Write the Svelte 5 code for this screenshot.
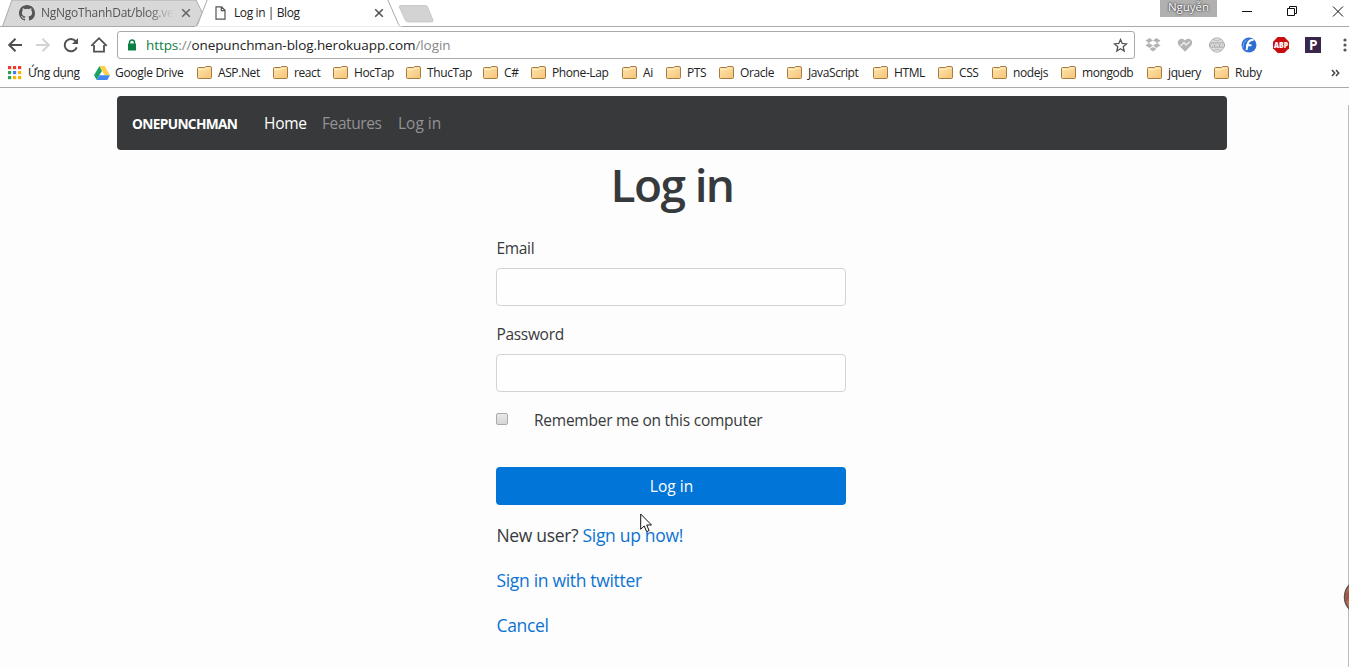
<script>
  const bookmarks = [
    ['ASP.Net', 76], ['react', 60], ['HocTap', 73], ['ThucTap', 77], ['C#', 48],
    ['Phone-Lap', 91], ['Ai', 44], ['PTS', 53], ['Oracle', 68], ['JavaScript', 86],
    ['HTML', 65], ['CSS', 54], ['nodejs', 69], ['mongodb', 86], ['jquery', 67], ['Ruby', 60]
  ];
  const appColors = ['#f03a2e', '#f03a2e', '#f03a2e', '#2fa14f', '#3c80f0', '#f6b400', '#2fa14f', '#f6b400', '#f6b400'];
</script>

<div class="window">
  <div class="tabstrip">
    <svg class="tabshapes" width="1349" height="27" viewBox="0 0 1349 27">
      <path d="M0 26.5H1349" stroke="#aaa" />
      <path d="M2.5 26.5L12 0H196L202.500 13L196 26.500Z" fill="#d8d8d8" stroke="#aaa" />
      <path d="M195.500 27C197 26 198 24 199 21L207.500 -1H387.500L397.500 22C399 25.500 400 26.500 402 27Z" fill="#fff" stroke="#aaa" />
      <path d="M195 27H402" stroke="#fff" />
      <path d="M401 5.500H425.500Q427 5.500 427.700 7L433 20Q433.500 22 431.500 22H408Q406 22 405.200 20L399.300 7Q398.800 5.500 401 5.500Z" fill="#d3d3d3" stroke="#bdbdbd" stroke-width=".7" />
    </svg>
    <div class="tab first">
      <svg width="16" height="16" viewBox="0 0 16 16"><path fill="#555" d="M8 0C3.580 0 0 3.580 0 8c0 3.540 2.290 6.530 5.470 7.590.4.070.550-.170.550-.380 0-.190-.010-.820-.010-1.490-2.010.370-2.530-.490-2.690-.940-.090-.230-.480-.940-.820-1.130-.280-.150-.680-.520-.010-.530.630-.010 1.080.580 1.230.820.720 1.210 1.870.870 2.330.660.070-.520.280-.870.510-1.070-1.780-.2-3.640-.890-3.640-3.950 0-.870.310-1.590.820-2.150-.080-.2-.360-1.020.080-2.120 0 0 .670-.210 2.200.820a7.500 7.500 0 0 1 4 0c1.530-1.040 2.200-.820 2.200-.820.440 1.100.160 1.920.080 2.120.510.560.820 1.270.820 2.150 0 3.070-1.870 3.750-3.650 3.950.290.250.540.730.540 1.480 0 1.070-.010 1.930-.010 2.200 0 .210.150.460.550.380A8 8 0 0 0 16 8c0-4.420-3.580-8-8-8z" /></svg>
      <span class="tabname fade">NgNgoThanhDat/blog.ve</span>
      <svg class="x" width="10" height="10" viewBox="0 0 10 10"><path d="M1.200 1.200L8.800 8.800M8.800 1.200L1.200 8.800" stroke="#666" stroke-width="1.600" /></svg>
    </div>
    <div class="tab second">
      <svg width="11" height="14" viewBox="0 0 11 14"><path d="M1 .8H6.500L10 4.300V13.200H1ZM6.300 1V4.600H10" fill="#fff" stroke="#555" stroke-width="1.200" /></svg>
      <span class="tabname">Log in | Blog</span>
      <svg class="x" width="10" height="10" viewBox="0 0 10 10"><path d="M1.200 1.200L8.800 8.800M8.800 1.200L1.200 8.800" stroke="#555" stroke-width="1.600" /></svg>
    </div>
    <div class="controls">
      <span class="profile">Nguyễn</span>
      <svg width="104" height="26" viewBox="1242 0 104 26" fill="none" stroke="#111">
        <path d="M1242 11.500H1252M1287.500 8.500H1294.500V15.500H1287.500ZM1289.500 8V6.500H1296.500V13.500H1295M1333 6.500L1343 16.500M1343 6.500L1333 16.500" />
      </svg>
    </div>
  </div>

  <div class="toolbar">
    <svg class="nav-icons" width="108" height="20" viewBox="0 0 108 20" fill="none" stroke="#505050" stroke-width="2">
      <path d="M22 10H9.500M15.500 3.700L9.200 10L15.500 16.300" />
      <path d="M36 10H48.500M42.500 3.700L48.800 10L42.500 16.300" stroke="#d3d3d3" />
      <path d="M75.700 6.200A6.200 6.200 0 1 0 76.700 12.300" />
      <path d="M78 3V9H72Z" fill="#505050" stroke="none" />
      <path d="M91.300 10.800L99 3.200L106.700 10.800M94 10V16.700H104V10" stroke-width="1.800" />
    </svg>
    <div class="address">
      <svg width="10" height="12" viewBox="0 0 10 12"><path d="M2.500 5V3.500A2.500 2.500 0 0 1 7.500 3.500V5" fill="none" stroke="#0b8043" stroke-width="1.500" /><rect x="1" y="4.500" width="8" height="7" rx=".6" fill="#0b8043" /></svg>
      <span class="url"><i>https</i><b>://</b>onepunchman-blog.herokuapp.com<b>/login</b></span>
      <svg class="star" width="15" height="15" viewBox="0 0 15 15"><path d="M7.500 1.500L9.200 5.500L13.500 5.900L10.200 8.700L11.200 13L7.500 10.700L3.800 13L4.800 8.700L1.500 5.900L5.800 5.500Z" fill="none" stroke="#555" stroke-width="1.300" /></svg>
    </div>
    <div class="extensions">
      <svg width="16" height="16" viewBox="0 0 16 16" fill="#b4b4b4"><path d="M4.700 1L8 3.500L3.700 6L.5 3.500ZM11.300 1L15.500 3.500L12.300 6L8 3.500ZM3.700 6L8 8.600L4.700 11L.5 8.600ZM12.300 6L15.500 8.600L11.300 11L8 8.600ZM4.500 12L8 10L11.500 12L8 14.500Z" /></svg>
      <svg width="16" height="16" viewBox="0 0 16 16"><path d="M8 14.700L1.700 8.200C-1.500 4 4.500-.8 8 3.400C11.500-.8 17.500 4 14.300 8.200Z" fill="#b4b4b4" /><path d="M3.500 9L7 5.600L9 8L12.600 4.700" stroke="#eee" stroke-width="1.400" fill="none" /></svg>
      <svg width="16" height="16" viewBox="0 0 16 16"><circle cx="8" cy="8" r="7.200" fill="#ddd" stroke="#b8b8b8" /><path d="M4 2.500Q8 5 12 2.500M4 13.500Q8 11 12 13.500" stroke="#bbb" fill="none" /><rect y="5.500" width="16" height="5" rx="2" fill="#999" /><text x="8" y="9.800" text-anchor="middle" font-size="5" font-weight="700" fill="#eee">WWW</text></svg>
      <svg width="16" height="16" viewBox="0 0 16 16"><circle cx="8" cy="8" r="7.500" fill="#2d70d2" /><path d="M12.500 3C8.500 2.500 7 5 6.500 8L5.500 13M5 8.300H10.500" stroke="#fff" stroke-width="2" fill="none" /><path d="M1.700 11Q2 5 6 2.500" stroke="#7cb0f5" fill="none" /></svg>
      <svg width="16" height="16" viewBox="0 0 16 16"><path d="M4.700 0H11.300L16 4.700V11.300L11.300 16H4.700L0 11.300V4.700Z" fill="#c70d0d" /><text x="8" y="11" text-anchor="middle" font-size="8" font-weight="800" fill="#fff" textLength="14" lengthAdjust="spacingAndGlyphs">ABP</text></svg>
      <svg width="16" height="16" viewBox="0 0 16 16"><rect width="16" height="16" fill="#39264d" /><text x="8.200" y="12.900" text-anchor="middle" font-size="13.500" font-weight="700" fill="#fff">P</text></svg>
      <svg class="dots" width="4" height="16" viewBox="0 0 4 16" fill="#555"><circle cx="2" cy="3" r="1.600" /><circle cx="2" cy="8" r="1.600" /><circle cx="2" cy="13" r="1.600" /></svg>
    </div>
  </div>

  <div class="bookmarks">
    <div class="bookmark apps" style:width="86px">
      <svg width="14" height="14" viewBox="0 0 14 14">
        {#each appColors as color, i}<rect x={(i % 3) * 5} y={Math.floor(i / 3) * 5} width="3.200" height="3.200" fill={color} />{/each}
      </svg><span>Ứng dụng</span>
    </div>
    <div class="bookmark drive" style:width="103px">
      <svg width="16" height="14" viewBox="0 0 16 14"><path d="M5.400 0L0 9.300L2.700 14L8 4.700Z" fill="#1da362" /><path d="M5.400 0H10.700L16 9.300H10.700Z" fill="#ffcf48" /><path d="M5.400 9.300H16L13.300 14H2.700Z" fill="#4285f4" /></svg><span>Google Drive</span>
    </div>
    {#each bookmarks as [name, width]}
      <div class="bookmark" style:width="{width}px">
        <svg class="folder" width="15" height="13" viewBox="0 0 15 13"><path d="M.5 11.500V2.500Q.5 1.500 1.500 1.500H7.500L8.700 .5H13Q14.500 .5 14.500 2V11.500Q14.500 12.500 13.500 12.500H1.500Q.5 12.500 .5 11.500Z" fill="url(#folder)" stroke="#a87b42" /><path d="M1.500 3.500H7.700L9 2.200H13.500" fill="none" stroke="#fff0c5" /></svg><span>{name}</span>
      </div>
    {/each}
    <svg class="more" width="9" height="8" viewBox="0 0 9 8"><path d="M1 1L3.700 4L1 7M5 1L7.700 4L5 7" fill="none" stroke="#444" stroke-width="1.500" /></svg>
    <svg class="defs" width="0" height="0"><defs><linearGradient id="folder" x1="0" y1="0" x2="1" y2="1"><stop offset="0" stop-color="#ffe5ae" /><stop offset="1" stop-color="#f5c477" /></linearGradient></defs></svg>
  </div>

  <main>
    <nav>
      <strong>ONEPUNCHMAN</strong>
      <a class="active home" href="#home">Home</a>
      <a class="features" href="#features">Features</a>
      <a class="login" href="#login">Log in</a>
    </nav>
    <h1>Log in</h1>
    <form>
      <label for="email">Email</label>
      <input id="email" class="field" type="email" />
      <label class="password" for="password">Password</label>
      <input id="password" class="field" type="password" />
      <label class="remember"><input type="checkbox" /><span>Remember me on this computer</span></label>
      <button type="button">Log in</button>
      <p class="signup">New user? <a href="#signup">Sign up now!</a></p>
      <p class="twitter"><a href="#twitter">Sign in with twitter</a></p>
      <p class="cancel"><a href="#cancel">Cancel</a></p>
    </form>
    <div class="scroll-edge"></div>
    <svg class="bubble" width="6" height="38" viewBox="0 0 6 38"><circle cx="19" cy="19" r="17.500" fill="#c06b50" stroke="#555" stroke-width="1.500" /><path d="M2 17L6 12V21L3 24Z" fill="#a45545" /></svg>
    <svg class="cursor" width="13" height="20" viewBox="0 0 13 20"><path d="M.7 1V16.300L4.200 13L6.700 18.700L9.100 17.600L6.700 12H11.500Z" fill="#fff" stroke="#111" /></svg>
  </main>
</div>

<style>
  :global(body) { margin: 0; overflow: hidden; }
  .window { width: 1349px; height: 667px; display: flex; flex-direction: column; position: relative; overflow: hidden; background: #fff; font-family: "Open Sans", "Noto Sans", sans-serif; }
  svg { display: block; flex: none; }
  .tabstrip { height: 27px; position: relative; display: flex; align-items: flex-start; font-size: 12px; color: #222; }
  .tabshapes { position: absolute; inset: 0; }
  .tab { position: relative; height: 26px; display: flex; align-items: center; box-sizing: border-box; }
  .first { width: 202px; padding: 0 11px 0 19px; }
  .second { width: 198px; padding: 0 16px 0 13px; }
  .tabname { margin: 0 0 2px 6px; white-space: nowrap; }
  .second .tabname { margin-left: 8px; letter-spacing: -.4px; }
  .x { margin-left: auto; }
  .fade { width: 133px; overflow: hidden; color: #555; letter-spacing: -.25px; mask-image: linear-gradient(to right, #000 80%, transparent); }
  .controls { margin-left: auto; display: flex; gap: 25px; padding-right: 3px; position: relative; }
  .profile { width: 57px; height: 17px; line-height: 14px; background: #b0b0b0; color: #fff; text-align: center; font-size: 11.500px; text-shadow: 0 0 2px #333, 0 0 2px #444; }
  .toolbar { height: 36px; display: flex; align-items: center; }
  .nav-icons { margin-right: 9px; }
  .address { width: 1018px; height: 28px; box-sizing: border-box; border: 1px solid #aaa; border-radius: 3px; display: flex; align-items: center; padding: 0 6px 0 9px; }
  .url { margin-left: 9px; font-size: 13.500px; white-space: nowrap; color: #222; letter-spacing: -.08px; }
  .url i { color: #0b8043; font-style: normal; }
  .url b { color: #888; font-weight: 400; }
  .star { margin-left: auto; }
  .extensions { margin-left: 10px; display: flex; gap: 16px; }
  .extensions svg { overflow: visible; }
  .dots { margin-left: 6px; }
  .bookmarks { height: 25px; border-bottom: 1px solid #aaa; display: flex; padding: 0 9px 0 8px; align-items: flex-start; font-size: 12px; color: #222; position: relative; box-sizing: border-box; }
  .bookmark { height: 20px; flex: none; display: flex; align-items: center; gap: 6px; white-space: nowrap; letter-spacing: -.4px; }
  .bookmark span { margin-bottom: 2px; }
  .folder { margin-bottom: 1px; }
  .drive { gap: 5px; letter-spacing: -.3px; }
  .more { margin: 6px 0 0 auto; }
  .defs { position: absolute; }
  main { position: relative; display: flow-root; flex: 1; background: #fdfdfd; color: #373a3c; }
  nav { box-sizing: border-box; width: 1110px; height: 54px; margin: 8px 0 0 117px; border-radius: 4px; background: #38393b; display: flex; align-items: center; padding: 0 0 0 15px; font-size: 15.500px; color: #fff; }
  a { color: #0c73d3; text-decoration: none; }
  nav strong { font-size: 13.700px; width: 132px; letter-spacing: -.65px; }
  nav a { color: #929394; }
  nav .active { color: #fff; letter-spacing: -.3px; }
  .home { width: 58px; }
  .features { width: 76px; letter-spacing: -.4px; }
  h1 { margin: 6px 0 0; padding-left: 497px; width: 350px; text-align: center; font-size: 46px; font-weight: 600; line-height: 56px; letter-spacing: -1.600px; height: 68px; }
  form { display: flex; flex-direction: column; width: 350px; margin-left: 496px; font-size: 15.500px; letter-spacing: -.32px; }
  form > label { height: 24px; line-height: 24px; margin: 11px 0 8px; padding-left: .5px; }
  form label:first-child { margin-top: 12px; }
  .field { width: 350px; height: 38px; box-sizing: border-box; border: 1px solid #d4d4d4; border-radius: 4px; background: #fefefe; }
  form > .password { margin-top: 16px; }
  form > .remember { display: flex; align-items: center; margin: 17px 0 34px; padding: 0; }
  .remember input { appearance: none; box-sizing: border-box; width: 12px; height: 12px; margin: -4px 26px 0 0; border: 1px solid #aaa; border-radius: 2px; background: linear-gradient(#e9e9e9, #d6d6d6); }
  .remember span { margin-top: -2px; letter-spacing: -.24px; }
  button { height: 38px; padding: 0 0 0 1px; border: 0; border-radius: 4px; background: #0275d8; color: #fff; font: 15.500px "Open Sans", sans-serif; }
  p { margin: 17px 0 0; padding-left: .5px; height: 28px; line-height: 28px; font-size: 17.500px; white-space: nowrap; }
  .signup { margin-top: 16px; }
  .scroll-edge { position: absolute; right: 0; top: 17px; bottom: 0; width: 1px; background: #bbb; }
  .bubble { position: absolute; right: 0; top: 490px; }
  .cursor { position: absolute; left: 640px; top: 425px; }
</style>
